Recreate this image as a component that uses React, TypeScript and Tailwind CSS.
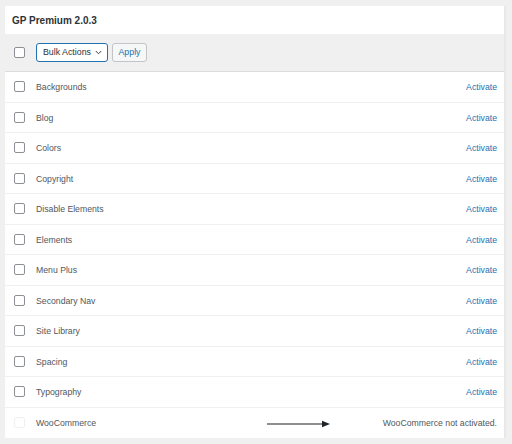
import React from "react";

const rows = [
  "Backgrounds",
  "Blog",
  "Colors",
  "Copyright",
  "Disable Elements",
  "Elements",
  "Menu Plus",
  "Secondary Nav",
  "Site Library",
  "Spacing",
  "Typography",
];

function Box({ disabled }: { disabled?: boolean }) {
  return (
    <div
      className={
        "w-[11px] h-[11px] rounded-[2px] border bg-white " +
        (disabled ? "border-[#f0f0f1]" : "border-[#8c8f94]")
      }
    />
  );
}

export default function App() {
  return (
    <div
      className="w-[512px] h-[444px] bg-[#f0f0f1] pt-[6px] pl-[5px] pr-[6px]"
      style={{ fontFamily: '"Liberation Sans", Arial, sans-serif' }}
    >
      <div className="bg-white border-r-2 border-[#e8e8e9] flex flex-col">
        <div className="h-[28px] flex items-center pl-[7px] text-[10px] font-bold text-[#2c3338]">
          GP Premium 2.0.3
        </div>
        <div className="h-[38px] bg-[#f0f0f1] flex items-center pl-[9px] border-b border-[#dcdcde]">
          <Box />
          <div className="ml-[11px] w-[72px] h-[19px] border border-[#2271b1] rounded-[3px] bg-white flex items-center pl-[6px] text-[8.8px] text-[#2c3338]">
            Bulk Actions
            <svg width="7" height="5" viewBox="0 0 7 5" className="ml-[4px]">
              <path d="M0.8 1 L3.5 3.8 L6.2 1" fill="none" stroke="#3c434a" strokeWidth="1" />
            </svg>
          </div>
          <div className="ml-[4px] w-[35px] h-[19px] border border-[#c3c4c7] rounded-[3px] bg-[#f6f7f7] flex items-center justify-center text-[8.8px] text-[#2271b1]">
            Apply
          </div>
        </div>
        {rows.map((r) => (
          <div
            key={r}
            className="h-[30.5px] flex items-center pl-[9px] pr-[7px] border-b border-[#f0f0f1] text-[8.7px] text-[#50575e]"
          >
            <Box />
            <span className="ml-[11px] pt-[2px]">{r}</span>
            <span className="ml-auto pt-[2px] text-[#2271b1]">Activate</span>
          </div>
        ))}
        <div className="h-[30.5px] flex items-center pl-[9px] pr-[7px] text-[8.7px] text-[#50575e]">
          <Box disabled />
          <span className="ml-[11px] pt-[2px]">WooCommerce</span>
          <svg width="64" height="8" viewBox="0 0 64 8" className="ml-[171px] mt-[2px]">
            <line x1="0" y1="4" x2="56" y2="4" stroke="#1d2327" strokeWidth="1.2" />
            <path d="M55 0.8 L63 4 L55 7.2 Z" fill="#1d2327" />
          </svg>
          <span className="ml-auto pt-[2px]">WooCommerce not activated.</span>
        </div>
      </div>
    </div>
  );
}
